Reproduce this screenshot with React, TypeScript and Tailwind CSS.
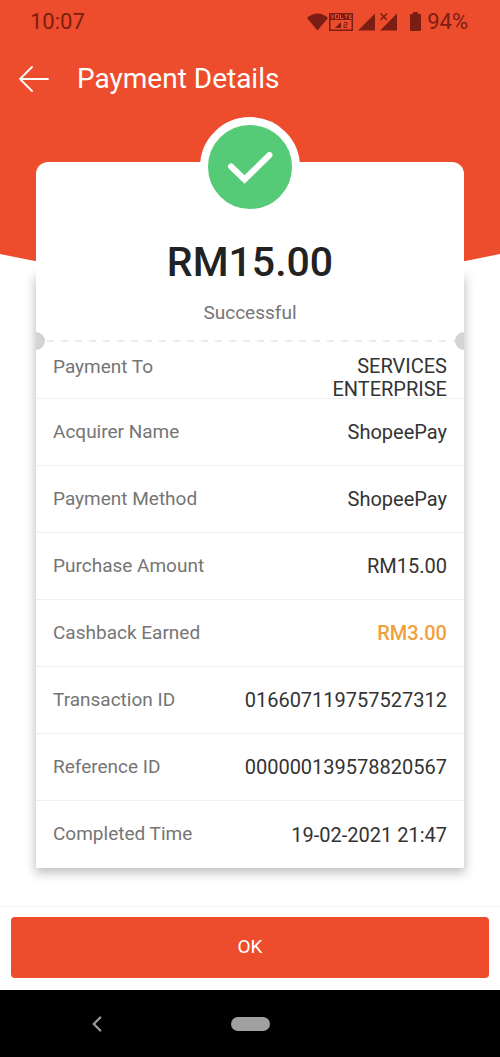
import { ChevronLeft } from 'lucide-react';

const details = [
  { label: 'Acquirer Name', value: 'ShopeePay' },
  { label: 'Payment Method', value: 'ShopeePay' },
  { label: 'Purchase Amount', value: 'RM15.00' },
  { label: 'Cashback Earned', value: 'RM3.00', highlight: true },
  { label: 'Transaction ID', value: '016607119757527312' },
  { label: 'Reference ID', value: '000000139578820567' },
  { label: 'Completed Time', value: '19-02-2021 21:47' },
];

function StatusBar() {
  return (
    <div className="flex h-[43px] items-center justify-between pl-[30px] pr-8 text-[22px] text-[#7b1d12]">
      <span>10:07</span>
      <div className="flex items-center gap-1">
        <svg width="94" height="20" viewBox="0 0 94 20" fill="currentColor" aria-hidden="true">
          <path d="M0 6C6 0 15 0 21 6L10.5 18.500Z" />
          <path d="M22 1H46V19H22ZM23.500 8V17.500H44.500V8Z" fillRule="evenodd" />
          <path
            d="M24 2.500L25.500 6.500L27 2.500M28.500 2.500H31.500V6.500H28.500ZM33.500 2.500V6.500H36.500M37.500 3H41M39.300 3V6.500M45 3H42.500V6.500H45M42.500 4.800H44.500"
            fill="none"
            stroke="#ee4d2d"
          />
          <path d="M28 16L34 10V16Z" />
          <path d="M37 10.500H40V13H37V15.500H40.500" fill="none" stroke="currentColor" />
          <path d="M51 18.500L68 1.500V18.500Z" />
          <path d="M73 18.500L90 1.500V18.500Z" />
          <path d="M73.500 1.500L80 8M80 1.500L73.500 8" stroke="currentColor" strokeWidth="1.500" />
        </svg>
        <svg width="18" height="20" viewBox="0 0 18 20" fill="currentColor" aria-hidden="true">
          <path d="M8 0H13V2H15Q16 2 16 3V18Q16 19 15 19H6Q5 19 5 18V3Q5 2 6 2H8Z" />
        </svg>
        <span>94%</span>
      </div>
    </div>
  );
}

function Header() {
  return (
    <header className="flex h-[71px] items-center gap-7 pl-[19px] text-white">
      <button type="button" aria-label="Back">
        <svg width="30" height="26" viewBox="0 0 30 26" fill="none" aria-hidden="true">
          <path
            d="M13 1L1 13L13 25M1 13H29"
            stroke="currentColor"
            strokeWidth="1.8"
            strokeLinecap="round"
            strokeLinejoin="round"
          />
        </svg>
      </button>
      <h1 className="text-[28px]">Payment Details</h1>
    </header>
  );
}

function Receipt() {
  return (
    <section className="relative mx-9 mt-12 rounded-t-xl bg-white">
      <div className="absolute inset-x-0 top-28 bottom-0 -z-10 shadow-[0_4px_10px_1px_rgba(0,0,0,0.25)]" />
      <div className="flex flex-col items-center pb-[15px]">
        <div className="-mt-[45px] flex size-[100px] items-center justify-center rounded-full border-8 border-white bg-[#55cb77] text-white">
          <svg width="48" height="36" viewBox="0 0 48 36" fill="none" aria-hidden="true">
            <path
              d="M5 17.500L18.500 30.500L43.500 6"
              stroke="currentColor"
              strokeWidth="6"
              strokeLinecap="round"
            />
          </svg>
        </div>
        <p className="mt-[21px] text-[41px] leading-12 font-medium text-[#222]">RM15.00</p>
        <p className="mt-[15px] text-[19px] leading-6 text-[#757575]">Successful</p>
      </div>
      <div className="-my-2 flex items-center">
        <span className="h-[18px] w-[9px] rounded-r-full bg-[#d4d4d4]" />
        <span className="h-0.5 flex-1 bg-[repeating-linear-gradient(90deg,transparent_0_2px,#ebebeb_2px_9px,transparent_9px_14px)]" />
        <span className="h-[18px] w-[9px] rounded-l-full bg-[#d4d4d4]" />
      </div>
      <dl className="divide-y divide-[#f0f0f0]">
        <div className="flex h-[57px] justify-between px-[17px] pt-[13px] leading-[23px]">
          <dt className="text-[19px] text-[#757575]">Payment To</dt>
          <dd className="w-32 text-right text-[#333]">SERVICES ENTERPRISE</dd>
        </div>
        {details.map(({ label, value, highlight }) => (
          <div key={label} className="flex h-[67px] items-center justify-between px-[17px]">
            <dt className="text-[19px] text-[#757575]">{label}</dt>
            <dd className={highlight ? 'font-medium text-[#f0a03c]' : 'text-[#333]'}>{value}</dd>
          </div>
        ))}
      </dl>
    </section>
  );
}

export default function App() {
  return (
    <div className="flex min-h-screen flex-col bg-white font-['Roboto',sans-serif] text-[20px]">
      <main className="relative isolate flex-1 pb-[38px]">
        <svg
          className="absolute inset-x-0 top-0 -z-20 h-[290px] w-full text-[#ee4d2d]"
          viewBox="0 0 500 290"
          preserveAspectRatio="none"
          fill="currentColor"
          aria-hidden="true"
        >
          <path d="M0 0H500V254Q250 308 0 254Z" />
        </svg>
        <StatusBar />
        <Header />
        <Receipt />
      </main>
      <footer className="border-t border-[#f3f3f3] px-[11px] pt-2.5 pb-3">
        <button
          type="button"
          className="h-[61px] w-full rounded-sm bg-[#ee4d2d] text-[19px] text-white"
        >
          OK
        </button>
      </footer>
      <nav className="grid h-[67px] grid-cols-[1fr_auto_1fr] items-center bg-black text-[#a0a0a0]">
        <button type="button" aria-label="Back" className="justify-self-start pl-[84px]">
          <ChevronLeft size={26} />
        </button>
        <button type="button" aria-label="Home" className="h-3.5 w-[39px] rounded-full bg-[#a0a0a0]" />
      </nav>
    </div>
  );
}
